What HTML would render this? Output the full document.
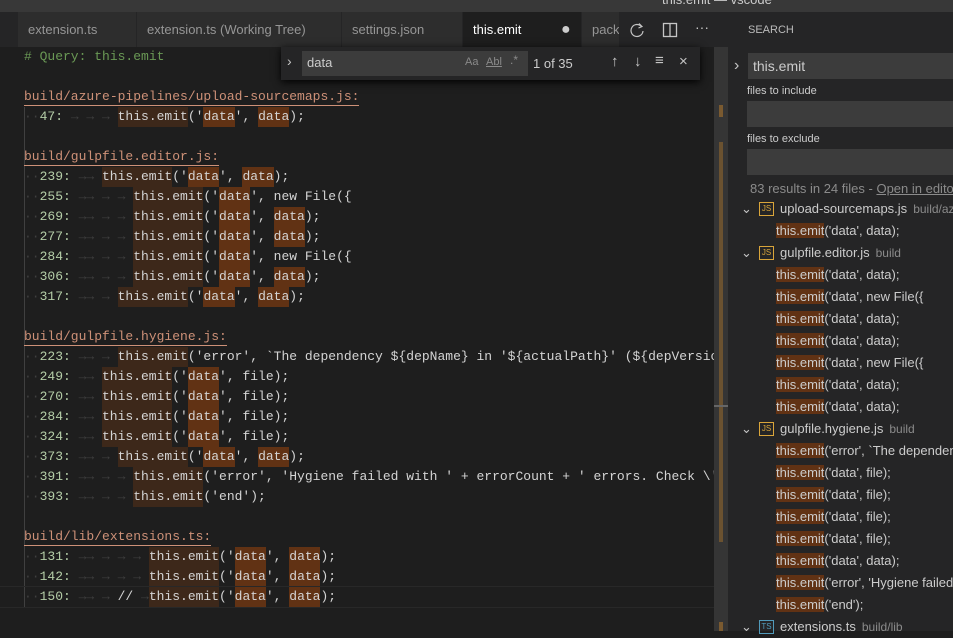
<!DOCTYPE html>
<html><head><meta charset="utf-8"><style>
*{margin:0;padding:0;box-sizing:border-box}
body{width:953px;height:631px;overflow:hidden;background:#1e1e1e;font-family:"Liberation Sans",sans-serif;position:relative}
.abs{position:absolute}
#title{left:0;top:0;width:953px;height:12px;background:#383838;color:#ccc;font-size:13px;overflow:hidden}
#tabs{left:0;top:12px;width:728px;height:35px;background:#252526}
.tab{position:absolute;top:0;height:35px;background:#2d2d2d;color:#969696;font-size:13px;line-height:35px;padding-left:10px;border-right:1px solid #252526;overflow:hidden;white-space:nowrap}
#ed{left:0;top:47px;width:714px;height:584px;font-family:"Liberation Mono",monospace;font-size:13px;color:#d4d4d4}
.l{position:absolute;left:24px;height:20px;line-height:20px;white-space:pre;width:690px}
.n{color:#b5cea8}
.g{color:#3f3f3f}
.h{color:#ce9178;border-bottom:1px solid #ce9178;display:inline-block;line-height:17px;margin-top:1px}
.c{position:absolute;top:0}
.e{background:#3d281a;display:inline-block;height:20px}
.d{background:#613214;display:inline-block;height:20px}
#sb{left:714px;top:47px;width:14px;height:584px;background:#2f2f2f}
#side{left:728px;top:12px;width:225px;height:619px;background:#252526;font-size:13px;color:#ccc}
.r{position:absolute;left:48px;height:22px;line-height:22px;white-space:nowrap}
.m{background:#613214}
.f{position:absolute;left:0;height:22px;line-height:22px;white-space:nowrap;width:225px}
.ic{position:absolute;left:31px;top:4px;width:15px;height:14px;border:1px solid #d9a53a;color:#d9a53a;font-size:8px;line-height:12px;text-align:center}
.fn{position:absolute;left:52px}
.pa{color:#8b8b8b;font-size:12px;margin-left:6px}
.chev{position:absolute;left:13px;top:0;color:#c5c5c5}
</style></head><body>
<div id="title" class="abs"><div style="position:absolute;left:662px;top:-8px">this.emit — vscode</div></div>
<div id="tabs" class="abs">
<div class="tab" style="left:18px;width:119px">extension.ts</div>
<div class="tab" style="left:137px;width:205px">extension.ts (Working Tree)</div>
<div class="tab" style="left:342px;width:121px">settings.json</div>
<div class="tab" style="left:463px;width:119px;background:#1e1e1e;color:#fff">this.emit<span style="position:absolute;left:98px;top:0;color:#ccc;font-size:16px">●</span></div>
<div class="tab" style="left:582px;width:38px">pack</div>
<svg class="abs" style="left:627px;top:8px" width="20" height="20" viewBox="0 0 20 20"><path d="M14.5 6.5A6 6 0 1 0 16 11" fill="none" stroke="#c5c5c5" stroke-width="1.2"/><path d="M12 3.5l3 3-3.5 1.5" fill="none" stroke="#c5c5c5" stroke-width="1.2"/></svg>
<svg class="abs" style="left:662px;top:10px" width="16" height="16"><rect x="1.5" y="1.5" width="13" height="13" fill="none" stroke="#c5c5c5" stroke-width="1.3"/><line x1="8" y1="1.5" x2="8" y2="14.5" stroke="#c5c5c5" stroke-width="1.3"/></svg>
<div class="abs" style="left:695px;top:7px;color:#c5c5c5;font-size:14px">···</div>
</div>
<div id="ed" class="abs">
<div class="abs" style="left:24px;top:60px;width:1px;height:500px;background:#404040"></div>
<div class="l" style="top:0;color:#6a9955"># Query: this.emit</div>

<div class="l" style="top:40px"><span class="h">build/azure-pipelines/upload-sourcemaps.js:</span></div>
<div class="l" style="top:60px"><span class="g">··</span><span class="n">47:</span><span class="g"> → → →</span><span class="c" style="left:12ch"><span class="e">this.emit</span>('<span class="d">data</span>', <span class="d">data</span>);</span></div>

<div class="l" style="top:100px"><span class="h">build/gulpfile.editor.js:</span></div>
<div class="l" style="top:120px"><span class="g">··</span><span class="n">239:</span><span class="g"> →→</span><span class="c" style="left:10ch"><span class="e">this.emit</span>('<span class="d">data</span>', <span class="d">data</span>);</span></div>
<div class="l" style="top:140px"><span class="g">··</span><span class="n">255:</span><span class="g"> →→ → →</span><span class="c" style="left:14ch"><span class="e">this.emit</span>('<span class="d">data</span>', new File({</span></div>
<div class="l" style="top:160px"><span class="g">··</span><span class="n">269:</span><span class="g"> →→ → →</span><span class="c" style="left:14ch"><span class="e">this.emit</span>('<span class="d">data</span>', <span class="d">data</span>);</span></div>
<div class="l" style="top:180px"><span class="g">··</span><span class="n">277:</span><span class="g"> →→ → →</span><span class="c" style="left:14ch"><span class="e">this.emit</span>('<span class="d">data</span>', <span class="d">data</span>);</span></div>
<div class="l" style="top:200px"><span class="g">··</span><span class="n">284:</span><span class="g"> →→ → →</span><span class="c" style="left:14ch"><span class="e">this.emit</span>('<span class="d">data</span>', new File({</span></div>
<div class="l" style="top:220px"><span class="g">··</span><span class="n">306:</span><span class="g"> →→ → →</span><span class="c" style="left:14ch"><span class="e">this.emit</span>('<span class="d">data</span>', <span class="d">data</span>);</span></div>
<div class="l" style="top:240px"><span class="g">··</span><span class="n">317:</span><span class="g"> →→ →</span><span class="c" style="left:12ch"><span class="e">this.emit</span>('<span class="d">data</span>', <span class="d">data</span>);</span></div>

<div class="l" style="top:280px"><span class="h">build/gulpfile.hygiene.js:</span></div>
<div class="l" style="top:300px"><span class="g">··</span><span class="n">223:</span><span class="g"> →→ →</span><span class="c" style="left:12ch"><span class="e">this.emit</span>('error', `The dependency ${depName} in '${actualPath}' (${depVersion}</span></div>
<div class="l" style="top:320px"><span class="g">··</span><span class="n">249:</span><span class="g"> →→</span><span class="c" style="left:10ch"><span class="e">this.emit</span>('<span class="d">data</span>', file);</span></div>
<div class="l" style="top:340px"><span class="g">··</span><span class="n">270:</span><span class="g"> →→</span><span class="c" style="left:10ch"><span class="e">this.emit</span>('<span class="d">data</span>', file);</span></div>
<div class="l" style="top:360px"><span class="g">··</span><span class="n">284:</span><span class="g"> →→</span><span class="c" style="left:10ch"><span class="e">this.emit</span>('<span class="d">data</span>', file);</span></div>
<div class="l" style="top:380px"><span class="g">··</span><span class="n">324:</span><span class="g"> →→</span><span class="c" style="left:10ch"><span class="e">this.emit</span>('<span class="d">data</span>', file);</span></div>
<div class="l" style="top:400px"><span class="g">··</span><span class="n">373:</span><span class="g"> →→ →</span><span class="c" style="left:12ch"><span class="e">this.emit</span>('<span class="d">data</span>', <span class="d">data</span>);</span></div>
<div class="l" style="top:420px"><span class="g">··</span><span class="n">391:</span><span class="g"> →→ → →</span><span class="c" style="left:14ch"><span class="e">this.emit</span>('error', 'Hygiene failed with ' + errorCount + ' errors. Check \'bu</span></div>
<div class="l" style="top:440px"><span class="g">··</span><span class="n">393:</span><span class="g"> →→ → →</span><span class="c" style="left:14ch"><span class="e">this.emit</span>('end');</span></div>

<div class="l" style="top:480px"><span class="h">build/lib/extensions.ts:</span></div>
<div class="l" style="top:500px"><span class="g">··</span><span class="n">131:</span><span class="g"> →→ → → →</span><span class="c" style="left:16ch"><span class="e">this.emit</span>('<span class="d">data</span>', <span class="d">data</span>);</span></div>
<div class="l" style="top:520px"><span class="g">··</span><span class="n">142:</span><span class="g"> →→ → → →</span><span class="c" style="left:16ch"><span class="e">this.emit</span>('<span class="d">data</span>', <span class="d">data</span>);</span></div>
<div class="abs" style="left:0;top:539px;width:714px;height:22px;border-top:1px solid #282828;border-bottom:1px solid #282828"></div>
<div class="l" style="top:540px"><span class="g">··</span><span class="n">150:</span><span class="g"> →→ →</span><span class="c" style="left:12ch">//<span class="g"> →</span></span><span class="c" style="left:16ch"><span class="e">this.emit</span>('<span class="d">data</span>', <span class="d">data</span>);</span></div>
</div>

<!-- find widget -->
<div class="abs" style="left:281px;top:47px;width:419px;height:33px;background:#252526;box-shadow:0 2px 8px #000;font-size:13px;color:#ccc">
<div class="abs" style="left:6px;top:6px;color:#c5c5c5;font-size:14px">›</div>
<div class="abs" style="left:21px;top:4px;width:226px;height:25px;background:#3c3c3c"></div>
<div class="abs" style="left:26px;top:8px;color:#ccc">data</div>
<div class="abs" style="left:184px;top:9px;color:#8a8a8a;font-size:11px">Aa</div>
<div class="abs" style="left:205px;top:9px;color:#8a8a8a;font-size:11px;text-decoration:underline">Abl</div>
<div class="abs" style="left:229px;top:6px;color:#8a8a8a;font-size:12px">.*</div>
<div class="abs" style="left:252px;top:9px;color:#ccc">1 of 35</div>
<div class="abs" style="left:330px;top:6px;color:#c5c5c5;font-size:15px">↑</div>
<div class="abs" style="left:353px;top:6px;color:#c5c5c5;font-size:15px">↓</div>
<div class="abs" style="left:374px;top:5px;color:#c5c5c5;font-size:15px">≡</div>
<div class="abs" style="left:398px;top:6px;color:#c5c5c5;font-size:15px">×</div>
</div>

<div id="sb" class="abs">
<div class="abs" style="left:0;top:0;width:14px;height:584px;background:#353535"></div>
<div class="abs" style="left:5px;top:58px;width:4px;height:12px;background:#7a5a30"></div>
<div class="abs" style="left:5px;top:95px;width:4px;height:400px;background:#6b5230"></div>
<div class="abs" style="left:0;top:358px;width:14px;height:2px;background:#666"></div>
<div class="abs" style="left:5px;top:575px;width:4px;height:9px;background:#7a5a30"></div>
</div>

<div id="side" class="abs">
<div class="abs" style="left:20px;top:12px;font-size:11px;color:#bbb">SEARCH</div>
<div class="abs" style="left:6px;top:45px;color:#c5c5c5;font-size:16px">›</div>
<div class="abs" style="left:20px;top:41px;width:205px;height:26px;background:#3c3c3c"></div>
<div class="abs" style="left:25px;top:46px;color:#ccc;font-size:14px">this.emit</div>
<div class="abs" style="left:19px;top:73px;font-size:11px;color:#ccc">files to include</div>
<div class="abs" style="left:19px;top:89px;width:206px;height:26px;background:#3c3c3c"></div>
<div class="abs" style="left:19px;top:121px;font-size:11px;color:#ccc">files to exclude</div>
<div class="abs" style="left:19px;top:137px;width:206px;height:26px;background:#3c3c3c"></div>
<div class="abs" style="left:22px;top:169px;color:#8b8b8b;white-space:nowrap">83 results in 24 files - <span style="text-decoration:underline">Open in editor</span></div>

<div class="f" style="top:186px"><span class="chev">⌄</span><span class="ic">JS</span><span class="fn">upload-sourcemaps.js<span class="pa">build/azure</span></span></div>
<div class="r" style="top:208px"><span class="m">this.emit</span>('data', data);</div>
<div class="f" style="top:230px"><span class="chev">⌄</span><span class="ic">JS</span><span class="fn">gulpfile.editor.js<span class="pa">build</span></span></div>
<div class="r" style="top:252px"><span class="m">this.emit</span>('data', data);</div>
<div class="r" style="top:274px"><span class="m">this.emit</span>('data', new File({</div>
<div class="r" style="top:296px"><span class="m">this.emit</span>('data', data);</div>
<div class="r" style="top:318px"><span class="m">this.emit</span>('data', data);</div>
<div class="r" style="top:340px"><span class="m">this.emit</span>('data', new File({</div>
<div class="r" style="top:362px"><span class="m">this.emit</span>('data', data);</div>
<div class="r" style="top:384px"><span class="m">this.emit</span>('data', data);</div>
<div class="f" style="top:406px"><span class="chev">⌄</span><span class="ic">JS</span><span class="fn">gulpfile.hygiene.js<span class="pa">build</span></span></div>
<div class="r" style="top:428px"><span class="m">this.emit</span>('error', `The dependency</div>
<div class="r" style="top:450px"><span class="m">this.emit</span>('data', file);</div>
<div class="r" style="top:472px"><span class="m">this.emit</span>('data', file);</div>
<div class="r" style="top:494px"><span class="m">this.emit</span>('data', file);</div>
<div class="r" style="top:516px"><span class="m">this.emit</span>('data', file);</div>
<div class="r" style="top:538px"><span class="m">this.emit</span>('data', data);</div>
<div class="r" style="top:560px"><span class="m">this.emit</span>('error', 'Hygiene failed</div>
<div class="r" style="top:582px"><span class="m">this.emit</span>('end');</div>
<div class="f" style="top:604px"><span class="chev">⌄</span><span class="ic" style="border-color:#519aba;color:#519aba">TS</span><span class="fn">extensions.ts<span class="pa">build/lib</span></span></div>
</div>
</body></html>
